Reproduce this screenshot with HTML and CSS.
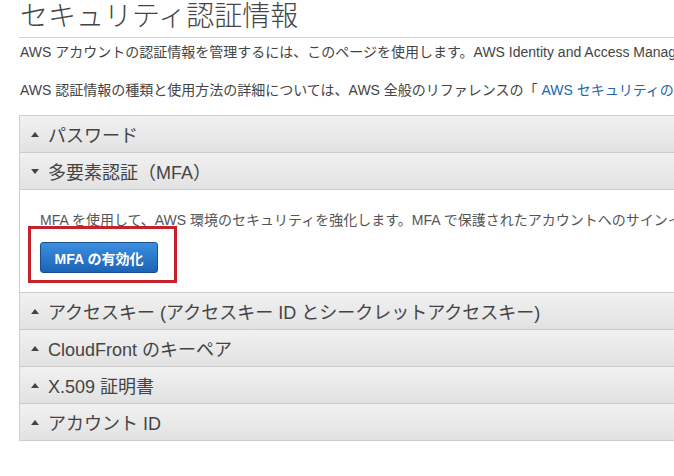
FILE: index.html
```html
<!DOCTYPE html>
<html lang="ja">
  <head>
    <meta charset="UTF-8" />
    <title>セキュリティ認証情報</title>
    <link rel="stylesheet" href="styles.css">
  </head>
  <body>
    <div class="page">
      <h1 class="title">セキュリティ認証情報</h1>

      <p class="intro">AWS アカウントの認証情報を管理するには、このページを使用します。AWS Identity and Access Management (IAM) ユーザーの認証情報を管理するには、IAM コンソールを使用してください。</p>
      <p class="intro">AWS 認証情報の種類と使用方法の詳細については、AWS 全般のリファレンスの「 <a href="#" class="link">AWS セキュリティの認証情報</a>」を参照してください。</p>

      <div class="accordion">
        <div class="section">
          <div class="section-head"><span class="caret up"></span>パスワード</div>
        </div>
        <div class="section open">
          <div class="section-head"><span class="caret down"></span>多要素認証（MFA）</div>
          <div class="section-body">
            <p class="body-text">MFA を使用して、AWS 環境のセキュリティを強化します。MFA で保護されたアカウントへのサインインには、ユーザー名、パスワード、MFA デバイスからの認証コードが必要です。</p>
            <button class="primary-btn">MFA の有効化</button>
            <div class="highlight"></div>
          </div>
        </div>
        <div class="section">
          <div class="section-head"><span class="caret up"></span>アクセスキー (アクセスキー ID とシークレットアクセスキー)</div>
        </div>
        <div class="section">
          <div class="section-head"><span class="caret up"></span>CloudFront のキーペア</div>
        </div>
        <div class="section">
          <div class="section-head"><span class="caret up"></span>X.509 証明書</div>
        </div>
        <div class="section">
          <div class="section-head"><span class="caret up"></span>アカウント ID</div>
        </div>
      </div>
    </div>
  </body>
</html>
```

FILE: styles.css
```css
* {
  margin: 0;
  padding: 0;
  box-sizing: border-box;
}

body {
  font-family: "Liberation Sans", Arial, "Noto Sans CJK JP", sans-serif;
  color: #444;
  background: #ffffff;
  width: 674px;
  height: 476px;
  overflow: hidden;
}

.page {
  padding-left: 19px;
  width: 760px;
}

.title {
  font-size: 28px;
  font-weight: 300;
  line-height: 33px;
  color: #444;
  padding-bottom: 4px;
  border-bottom: 1px solid #d4d4d4;
  padding-left: 1px;
  white-space: nowrap;
}

.intro {
  font-size: 14px;
  line-height: 20px;
  white-space: nowrap;
  margin-top: 4px;
  padding-left: 1px;
  color: #444;
}

.intro + .intro {
  margin-top: 18px;
}

.link {
  color: #2366ab;
  text-decoration: none;
}

.accordion {
  margin-top: 15px;
  border: 1px solid #cfcfcf;
  border-bottom: none;
  width: 656px;
}

.section-head {
  height: 37px;
  display: flex;
  align-items: center;
  padding-left: 11px;
  font-size: 18px;
  color: #444;
  white-space: nowrap;
  background: linear-gradient(to bottom, #f1f1f1 0%, #e2e2e2 100%);
  border-bottom: 1px solid #cbcbcb;
}

.caret {
  width: 0;
  height: 0;
  border-left: 4px solid transparent;
  border-right: 4px solid transparent;
  margin-right: 9px;
}

.caret.up {
  border-bottom: 5px solid #444;
}

.caret.down {
  border-top: 5px solid #444;
}

.section-body {
  position: relative;
  background: #ffffff;
  padding: 20px 20px 19px 20px;
  border-bottom: 1px solid #cbcbcb;
}

.body-text {
  font-size: 14px;
  line-height: 20px;
  white-space: nowrap;
  color: #555;
}

.primary-btn {
  margin-top: 12px;
  width: 118px;
  height: 31px;
  font-family: "Liberation Sans", Arial, "Noto Sans CJK JP", sans-serif;
  font-size: 14px;
  font-weight: 700;
  color: #ffffff;
  background: linear-gradient(to bottom, #3b8fe0 0%, #1c63b6 100%);
  border: 1px solid #1b4f8e;
  border-radius: 3px;
  display: block;
}

/* annotation frame around the button */
.highlight {
  position: absolute;
  left: 8px;
  top: 36px;
  width: 149px;
  height: 57px;
  border: 3px solid #c4232c;
}
```
